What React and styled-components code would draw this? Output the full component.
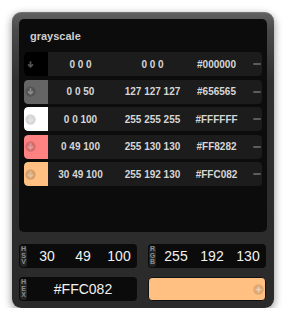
import React from "react";
import styled, { createGlobalStyle } from "styled-components";

const Global = createGlobalStyle`
  html, body { margin: 0; padding: 0; background: #ffffff; }
  body { font-family: "Liberation Sans", Arial, sans-serif; }
`;

const Frame = styled.div`
  margin: 12px 0 0 12px;
  width: 262px;
  height: 296px;
  box-sizing: border-box;
  padding: 7px;
  border-radius: 9px;
  background: linear-gradient(#626262 0px, #4a4a4a 18px, #303030 70px, #2a2a2a 100%);
  box-shadow: 0 3px 9px rgba(0, 0, 0, 0.45), inset 0 1px 0 rgba(255,255,255,0.12);
  display: flex;
  flex-direction: column;
`;

const Panel = styled.div`
  height: 213px;
  background: #0c0c0c;
  border-radius: 5px;
  box-sizing: border-box;
  padding: 10px 5px 0 5px;
  display: flex;
  flex-direction: column;
`;

const Title = styled.div`
  font-size: 11px;
  line-height: 14px;
  font-weight: bold;
  color: #cfcfcf;
  padding-left: 6px;
  margin-bottom: 9px;
`;

const List = styled.div`
  display: flex;
  flex-direction: column;
  gap: 3.5px;
`;

const Row = styled.div`
  height: 24px;
  background: #1c1c1c;
  border-radius: 4px;
  display: grid;
  grid-template-columns: 24px 65px 79px 49px 1fr;
  align-items: center;
  font-size: 10px;
  font-weight: bold;
  color: #d6d6d6;
  overflow: hidden;
`;

const Swatch = styled.div`
  height: 24px;
  background: ${(p) => p.$c};
  border-radius: 4px 0 0 4px;
  display: flex;
  align-items: center;
  padding-left: 1px;
`;

const Cell = styled.div`
  text-align: center;
  white-space: nowrap;
`;

const Minus = styled.div`
  justify-self: end;
  width: 8px;
  height: 2px;
  margin-right: 1px;
  background: #5c5c5c;
  border-radius: 1px;
`;

const Spacer = styled.div`
  height: 12px;
`;

const Controls = styled.div`
  display: grid;
  grid-template-columns: 118px 118px;
  column-gap: 11px;
  row-gap: 9px;
`;

const Box = styled.div`
  height: 24px;
  background: #0b0b0b;
  border-radius: 4px;
  display: grid;
  grid-template-columns: 10px repeat(${(p) => p.$n}, 1fr);
  align-items: center;
  color: #f2f2f2;
  font-size: 14px;
`;

const Label = styled.div`
  width: 7px;
  height: 21px;
  margin-left: 1px;
  background: #242424;
  border-radius: 3px;
  display: flex;
  flex-direction: column;
  align-items: center;
  justify-content: center;
  font-size: 7px;
  line-height: 6.8px;
  font-weight: bold;
  color: #8e8e8e;
`;

const Value = styled.div`
  text-align: center;
`;

const ColorBox = styled.div`
  height: 24px;
  box-sizing: border-box;
  background: ${(p) => p.$c};
  border: 1px solid #111;
  border-radius: 4px;
  display: flex;
  align-items: center;
  justify-content: flex-end;
  padding-right: 1px;
`;

const DownIcon = () => (
  <svg width="11" height="11" viewBox="0 0 11 11">
    <circle cx="5.5" cy="5.5" r="5.2" fill="rgba(0,0,0,0.16)" />
    <path d="M5.5 2.2 V7.6 M3 5.4 L5.5 7.9 L8 5.4" stroke="rgba(255,255,255,0.32)" strokeWidth="1.7" fill="none" />
  </svg>
);

const PlusIcon = () => (
  <svg width="11" height="11" viewBox="0 0 11 11">
    <circle cx="5.5" cy="5.5" r="5.2" fill="rgba(0,0,0,0.13)" />
    <path d="M5.5 2.5 V8.5 M2.5 5.5 H8.5" stroke="rgba(255,255,255,0.45)" strokeWidth="1.7" />
  </svg>
);

const rows = [
  { c: "#000000", hsv: "0 0 0", rgb: "0 0 0", hex: "#000000" },
  { c: "#656565", hsv: "0 0 50", rgb: "127 127 127", hex: "#656565" },
  { c: "#FFFFFF", hsv: "0 0 100", rgb: "255 255 255", hex: "#FFFFFF" },
  { c: "#FF8282", hsv: "0 49 100", rgb: "255 130 130", hex: "#FF8282" },
  { c: "#FFC082", hsv: "30 49 100", rgb: "255 192 130", hex: "#FFC082" },
];

const Letters = ({ t }) => (
  <Label>
    {t.split("").map((ch, i) => (
      <span key={i}>{ch}</span>
    ))}
  </Label>
);

export default function App() {
  return (
    <>
      <Global />
      <Frame>
        <Panel>
          <Title>grayscale</Title>
          <List>
            {rows.map((r) => (
              <Row key={r.hex}>
                <Swatch $c={r.c}>
                  <DownIcon />
                </Swatch>
                <Cell>{r.hsv}</Cell>
                <Cell>{r.rgb}</Cell>
                <Cell>{r.hex}</Cell>
                <Minus />
              </Row>
            ))}
          </List>
        </Panel>
        <Spacer />
        <Controls>
          <Box $n={3}>
            <Letters t="HSV" />
            <Value>30</Value>
            <Value>49</Value>
            <Value>100</Value>
          </Box>
          <Box $n={3}>
            <Letters t="RGB" />
            <Value>255</Value>
            <Value>192</Value>
            <Value>130</Value>
          </Box>
          <Box $n={1}>
            <Letters t="HEX" />
            <Value>#FFC082</Value>
          </Box>
          <ColorBox $c="#FFC082">
            <PlusIcon />
          </ColorBox>
        </Controls>
      </Frame>
    </>
  );
}
